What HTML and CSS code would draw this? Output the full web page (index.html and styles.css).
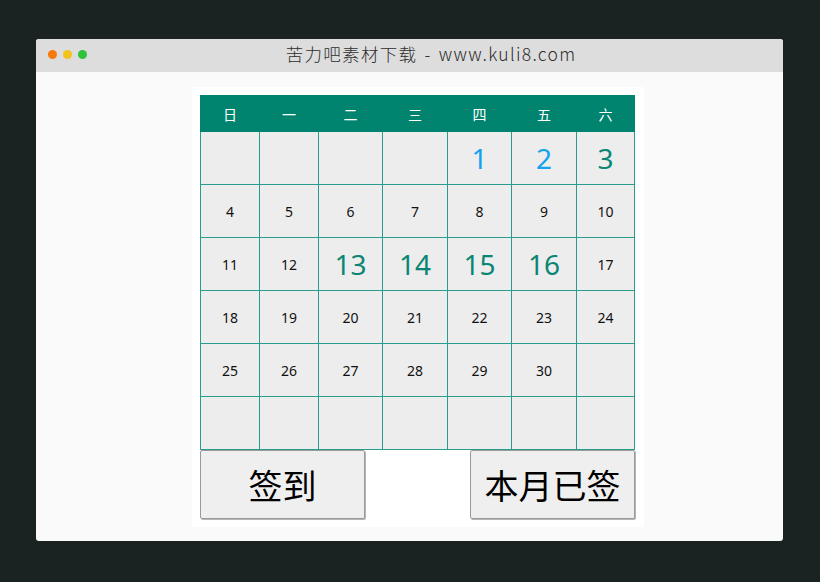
FILE: index.html
```html
<!DOCTYPE html>
<html>
<head>
<meta charset="utf-8">
<link rel="stylesheet" href="styles.css">
</head>
<body>
<div class="window">
  <div class="titlebar">
    <div class="dots"><span class="dot orange"></span><span class="dot yellow"></span><span class="dot green"></span></div>
    <div class="title">苦力吧素材下载 - www.kuli8.com</div>
  </div>
  <div class="content">
    <div class="panel">
      <table class="cal">
        <colgroup>
          <col class="c59"><col class="c59"><col class="c64"><col class="c65"><col class="c64"><col class="c65"><col class="c58">
        </colgroup>
        <thead>
          <tr><th>日</th><th>一</th><th>二</th><th>三</th><th>四</th><th>五</th><th>六</th></tr>
        </thead>
        <tbody>
          <tr><td></td><td></td><td></td><td></td><td class="big blue">1</td><td class="big blue">2</td><td class="big teal">3</td></tr>
          <tr><td>4</td><td>5</td><td>6</td><td>7</td><td>8</td><td>9</td><td>10</td></tr>
          <tr><td>11</td><td>12</td><td class="big teal">13</td><td class="big teal">14</td><td class="big teal">15</td><td class="big teal">16</td><td>17</td></tr>
          <tr><td>18</td><td>19</td><td>20</td><td>21</td><td>22</td><td>23</td><td>24</td></tr>
          <tr><td>25</td><td>26</td><td>27</td><td>28</td><td>29</td><td>30</td><td></td></tr>
          <tr><td></td><td></td><td></td><td></td><td></td><td></td><td></td></tr>
        </tbody>
      </table>
      <div class="actions">
        <button class="btn">签到</button>
        <button class="btn">本月已签</button>
      </div>
    </div>
  </div>
</div>
</body>
</html>
```
FILE: styles.css
```css
html, body {
  margin: 0;
  padding: 0;
}
body {
  background: #1a2322;
  width: 820px;
  height: 582px;
  padding-top: 39px;
  box-sizing: border-box;
  font-family: "Noto Sans", "Noto Sans CJK SC", sans-serif;
}
.window {
  margin-left: 36px;
  width: 747px;
  height: 502px;
  border-radius: 3px;
  overflow: hidden;
  background: #fafafa;
  display: flex;
  flex-direction: column;
}
.titlebar {
  height: 33px;
  background: #dddddd;
  position: relative;
  display: flex;
  align-items: center;
  justify-content: center;
}
.dots {
  position: absolute;
  left: 12px;
  top: 11px;
  display: flex;
  gap: 6px;
}
.dot {
  width: 9px;
  height: 9px;
  border-radius: 50%;
  display: block;
}
.orange { background: #f7780c; }
.yellow { background: #f1c31b; }
.green { background: #2fc23a; }
.title {
  font-family: "Noto Sans CJK SC", sans-serif;
  font-weight: 300;
  font-size: 17.5px;
  color: #2e2e2e;
  letter-spacing: 1.3px;
  word-spacing: 2px;
  margin-left: 43px;
  margin-bottom: 4px;
}
.content {
  flex: 1;
  padding-top: 15px;
}
.panel {
  margin-left: 156px;
  width: 436px;
  padding: 8px;
  background: #ffffff;
}
.cal {
  border-collapse: collapse;
  width: 435px;
  table-layout: fixed;
}
.c59 { width: 59px; }
.c64 { width: 64px; }
.c65 { width: 65px; }
.c58 { width: 58px; }
.cal th {
  background: #00846f;
  color: #ffffff;
  font-weight: normal;
  font-size: 14px;
  height: 35px;
  padding: 0;
  border: 1px solid #00846f;
  font-family: "Noto Sans CJK SC", sans-serif;
}
.cal td {
  background: #ededed;
  border: 1px solid #2a9c8c;
  height: 52px;
  padding: 0;
  text-align: center;
  font-size: 14px;
  color: #111;
}
.cal td.big {
  font-size: 28px;
}
.blue { color: #14a3ee !important; }
.teal { color: #0b8574 !important; }
.actions {
  width: 435px;
  display: flex;
  justify-content: space-between;
}
.btn {
  width: 165px;
  height: 69px;
  background: #efefef;
  border: 1px solid #9a9a9a;
  border-radius: 2px;
  box-shadow: 1px 1px 0 #b5b5b5;
  font-family: "Noto Sans CJK SC", sans-serif;
  font-size: 34px;
  color: #000;
  padding: 0;
  line-height: 1;
}
```
